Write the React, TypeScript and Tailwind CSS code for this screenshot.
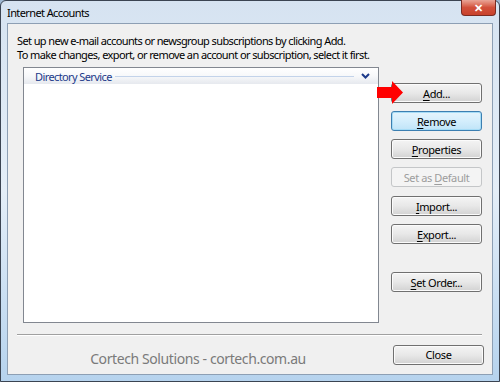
import React from "react";

const font = { fontFamily: '"Noto Sans", "Open Sans", sans-serif' };

function Btn({ u, rest, pre = "", className = "", focused = false, disabled = false }: { u: string; rest: string; pre?: string; className?: string; focused?: boolean; disabled?: boolean }) {
  let cls = "h-[20px] w-[91px] rounded-[3px] border text-[11px] tracking-[-0.4px] leading-none flex items-center justify-center ";
  if (disabled) cls += "border-[#c4c6c8] bg-[#f4f4f4] text-[#9d9d9d]";
  else if (focused) cls += "border-[#3c7fb1] bg-gradient-to-b from-[#e5f4fc] via-[#d4eefc] to-[#c0e4f8] text-black shadow-[inset_0_0_0_1px_#a6dcf6]";
  else cls += "border-[#707070] bg-gradient-to-b from-[#f4f4f4] via-[#e8e8e8] to-[#d2d2d2] text-black shadow-[inset_0_0_0_1px_#fbfbfb]";
  return (
    <div className={cls + " " + className}>
      <span>
        {pre}
        <span className="underline underline-offset-2">{u}</span>
        {rest}
      </span>
    </div>
  );
}

export default function App() {
  return (
    <div className="w-[500px] h-[382px] bg-[#9fb8d2] relative overflow-hidden" style={font}>
      <div className="w-[500px] h-[382px] rounded-t-[6px] border border-[#3b4452] bg-gradient-to-b from-[#d6e3f1] via-[#e4eef8] to-[#b6d3ee] flex flex-col px-[6px] pb-[6px]">
        <div className="h-[22px] flex items-start justify-between">
          <span className="text-[11px] tracking-[-0.6px] text-black leading-none mt-[6px]">Internet Accounts</span>
          <div className="-mt-px mr-[-3px] w-[35px] h-[16px] rounded-b-[4px] border border-[#7a2b22] border-t-0 bg-gradient-to-b from-[#e9a597] via-[#d2503b] to-[#c8422c] flex items-center justify-center">
            <span className="text-white text-[11px] font-bold leading-none">✕</span>
          </div>
        </div>
        <div className="flex-1 border border-[#8d9fb4] bg-[#f0f0f0] flex flex-col pl-[9px] pr-[10px] pt-[10px] relative">
          <div className="text-[11px] leading-[14px] text-black tracking-[-0.6px]">
            <div>Set up new e-mail accounts or newsgroup subscriptions by clicking Add.</div>
            <div>To make changes, export, or remove an account or subscription, select it first.</div>
          </div>
          <div className="flex mt-[5px] gap-[12px]">
            <div className="ml-[6px] w-[357px] h-[256px] border border-[#828790] bg-white flex flex-col">
              <div className="h-[16px] bg-gradient-to-b from-[#ffffff] via-[#f7f8fa] to-[#e6e9ee] flex items-center pl-[11px] pr-[8px]">
                <span className="text-[11px] tracking-[-0.6px] text-[#1c3a8a] leading-none">Directory Service</span>
                <div className="flex-1 h-px bg-[#c3d3ea] ml-[3px]" />
                <svg width="9" height="6" viewBox="0 0 9 6" className="ml-[7px]">
                  <path d="M1 1 L4.5 4.5 L8 1" stroke="#1c3a8a" strokeWidth="2" fill="none" />
                </svg>
              </div>
            </div>
            <div className="flex flex-col pt-[16px] relative">
              <svg className="absolute -left-[14px] top-[14px]" width="27" height="24" viewBox="0 0 27 24">
                <polygon points="0,6 15,6 15,0 26,11.5 15,23 15,17 0,17" fill="#ff0000" />
              </svg>
              <Btn u="A" rest="dd..." />
              <Btn u="R" rest="emove" focused className="mt-[8px]" />
              <Btn u="P" rest="roperties" className="mt-[8px]" />
              <Btn pre="Set as " u="D" rest="efault" disabled className="mt-[8px]" />
              <Btn u="I" rest="mport..." className="mt-[9px]" />
              <Btn u="E" rest="xport..." className="mt-[8px]" />
              <Btn u="S" rest="et Order..." className="mt-[28px]" />
            </div>
          </div>
          <div className="mt-[11px] h-[2px] border-t border-[#a0a0a0] border-b border-b-white" />
          <div className="flex items-start mt-[9px]">
            <div className="flex-1 flex justify-center pr-[14px] pt-[7px]">
              <span className="text-[14px] tracking-[-0.4px] text-[#7a7a7a] leading-[14px]">
                Cortech Solutions - cortech.com.au
              </span>
            </div>
            <div className="w-[91px] h-[20px] rounded-[3px] border border-[#707070] bg-gradient-to-b from-[#f4f4f4] via-[#e8e8e8] to-[#d2d2d2] shadow-[inset_0_0_0_1px_#fbfbfb] text-[11px] tracking-[-0.4px] flex items-center justify-center mr-[-2px]">
              Close
            </div>
          </div>
        </div>
      </div>
    </div>
  );
}
